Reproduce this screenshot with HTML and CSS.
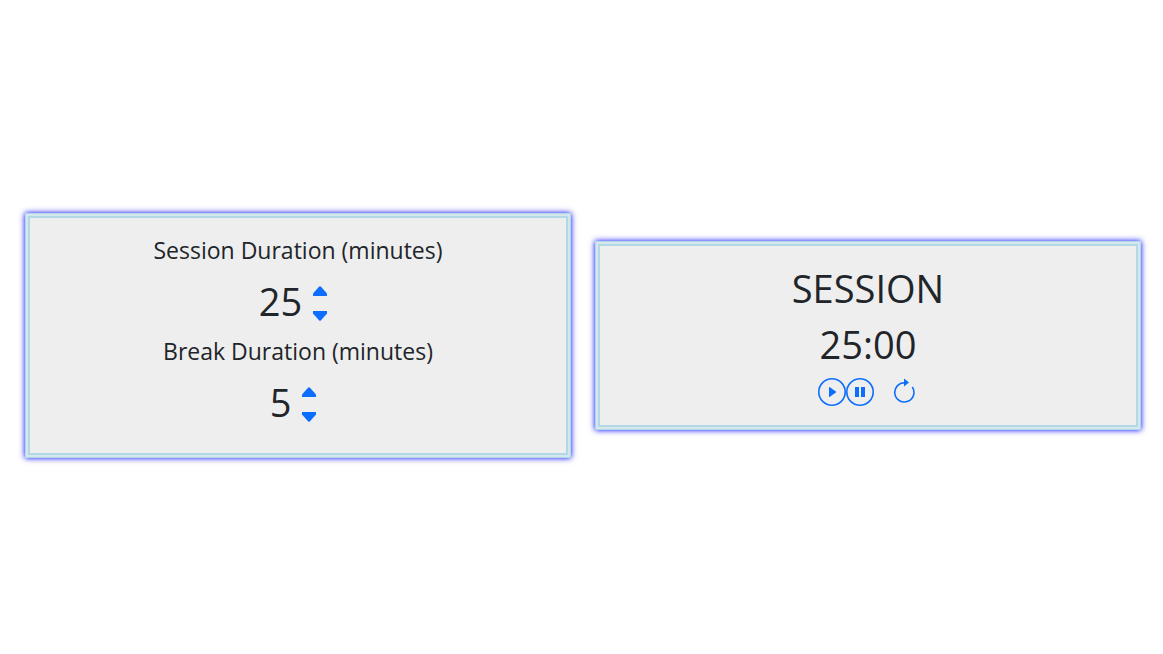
FILE: index.html
```html
<!DOCTYPE html>
<html lang="en">
<head>
<meta charset="utf-8">
<meta name="viewport" content="width=device-width, initial-scale=1">
<title>Session Timer</title>
<link rel="stylesheet" href="styles.css">
</head>
<body>
<main class="page">
  <section class="card settings">
    <h2 class="label">Session Duration (minutes)</h2>
    <div class="setting">
      <span class="value">25</span>
      <div class="stepper">
        <button type="button" aria-label="Increase session"><svg width="14" height="10" viewBox="0 0 14 10"><path d="M0 10V7.500L6 .8Q7-.2 8 .8L14 7.500V10Z"/></svg></button>
        <button type="button" aria-label="Decrease session"><svg width="14" height="10" viewBox="0 0 14 10"><path d="M0 0V2.500L6 9.200Q7 10.200 8 9.200L14 2.500V0Z"/></svg></button>
      </div>
    </div>
    <h2 class="label">Break Duration (minutes)</h2>
    <div class="setting">
      <span class="value">5</span>
      <div class="stepper">
        <button type="button" aria-label="Increase break"><svg width="14" height="10" viewBox="0 0 14 10"><path d="M0 10V7.500L6 .8Q7-.2 8 .8L14 7.500V10Z"/></svg></button>
        <button type="button" aria-label="Decrease break"><svg width="14" height="10" viewBox="0 0 14 10"><path d="M0 0V2.500L6 9.200Q7 10.200 8 9.200L14 2.500V0Z"/></svg></button>
      </div>
    </div>
  </section>
  <section class="card timer">
    <h1 class="value">SESSION</h1>
    <div class="value">25:00</div>
    <div class="controls">
      <button type="button" aria-label="Play"><svg width="28" height="28" viewBox="0 0 28 28"><circle class="line" cx="14" cy="14" r="13.200"/><path d="M11 9.500Q11 8.500 11.900 9.200L17.900 13.400Q18.700 14 17.900 14.600L11.900 18.800Q11 19.500 11 18.500Z"/></svg></button>
      <button type="button" aria-label="Pause"><svg width="28" height="28" viewBox="0 0 28 28"><circle class="line" cx="14" cy="14" r="13.200"/><path d="M9 9h4v10H9zM15 9h4v10h-4z"/></svg></button>
      <button type="button" class="reset" aria-label="Reset"><svg width="22" height="28" viewBox="0 0 22 28"><path class="line" d="M12 4.800A9.600 9.600 0 1 0 19.300 9"/><path d="M11 .5v8l5-4z"/></svg></button>
    </div>
  </section>
</main>
</body>
</html>
```
FILE: styles.css
```css
* { box-sizing: border-box; }
body {
  margin: 0;
  background: #fff;
  color: #212529;
  font-family: "Segoe UI", "Open Sans", "Noto Sans", sans-serif;
}
.page {
  min-height: 100vh;
  padding: 17px 22px 0 25px;
  display: grid;
  grid-template-columns: 1fr 1fr;
  gap: 24px;
  align-items: center;
}
.card {
  background: #eee;
  border: 1px solid lightblue;
  box-shadow: 0 0 6px blue, inset 0 0 0 2px #d5e7ec, inset 0 0 0 4px #b0d9e5;
  display: flex;
  flex-direction: column;
  align-items: center;
}
.settings { padding: 20px 24px 21px; }
.timer { padding: 18px 24px; }
.label {
  margin: 0;
  font-size: 23px;
  line-height: 32px;
  font-weight: 400;
}
.setting {
  display: flex;
  align-items: center;
  gap: 11px;
  height: 69px;
  padding-top: 1px;
  margin-right: 10px;
}
.value {
  margin: 0;
  font-size: 38px;
  line-height: 56px;
  font-weight: 400;
}
.stepper {
  display: flex;
  flex-direction: column;
  gap: 15px;
  padding-top: 4px;
}
button {
  display: block;
  margin: 0;
  padding: 0;
  border: 0;
  background: none;
  color: #0d6efd;
  cursor: pointer;
}
svg { display: block; fill: currentColor; }
.line { fill: none; stroke: currentColor; stroke-width: 1.6px; }
.controls {
  display: flex;
  align-items: center;
  height: 39px;
  padding-top: 1px;
  margin-right: 4px;
}
.reset { margin-left: 19px; }
```
